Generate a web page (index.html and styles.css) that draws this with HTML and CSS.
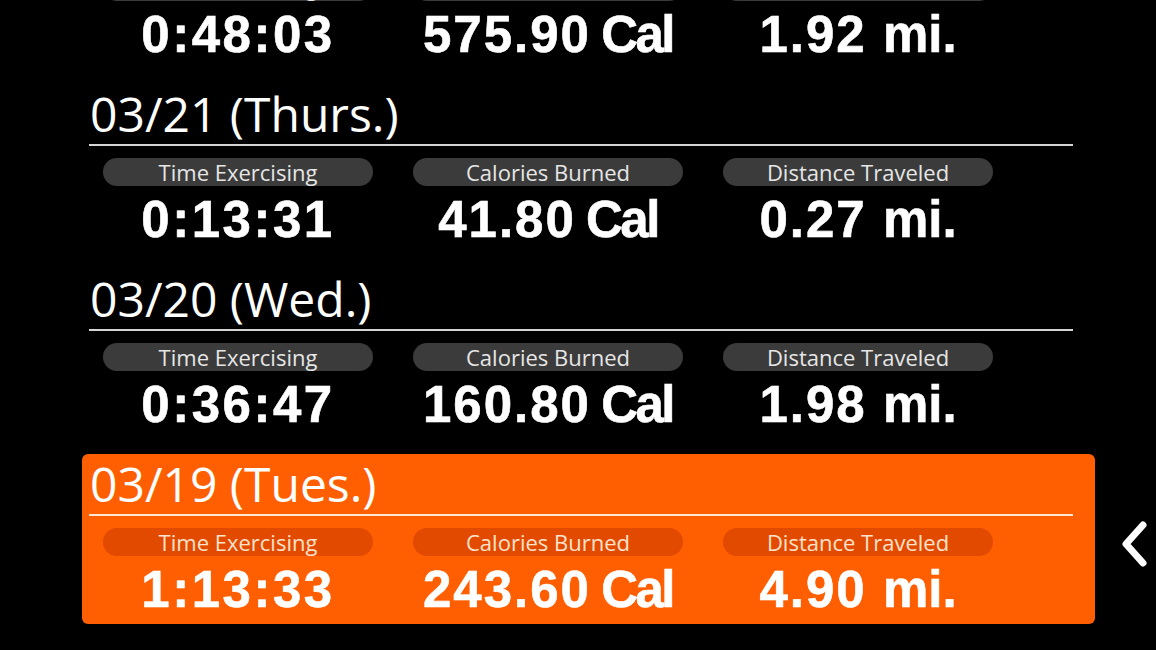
FILE: index.html
```html
<!DOCTYPE html>
<html lang="en">
<head>
<meta charset="utf-8">
<title>Activity Log</title>
<link rel="stylesheet" href="styles.css">
</head>
<body>
<div class="screen">
  <div class="list">
    <section class="day">
      <div class="date">03/22 (Fri.)</div>
      <div class="stats">
        <div class="stat"><div class="pill">Time Exercising</div><div class="value">0:48:03</div></div>
        <div class="stat"><div class="pill">Calories Burned</div><div class="value cal">575.90 <span class="unit">Cal</span></div></div>
        <div class="stat"><div class="pill">Distance Traveled</div><div class="value dist">1.92 <span class="unit">mi.</span></div></div>
      </div>
    </section>
    <section class="day">
      <div class="date">03/21 (Thurs.)</div>
      <div class="stats">
        <div class="stat"><div class="pill">Time Exercising</div><div class="value">0:13:31</div></div>
        <div class="stat"><div class="pill">Calories Burned</div><div class="value cal">41.80 <span class="unit">Cal</span></div></div>
        <div class="stat"><div class="pill">Distance Traveled</div><div class="value dist">0.27 <span class="unit">mi.</span></div></div>
      </div>
    </section>
    <section class="day">
      <div class="date">03/20 (Wed.)</div>
      <div class="stats">
        <div class="stat"><div class="pill">Time Exercising</div><div class="value">0:36:47</div></div>
        <div class="stat"><div class="pill">Calories Burned</div><div class="value cal">160.80 <span class="unit">Cal</span></div></div>
        <div class="stat"><div class="pill">Distance Traveled</div><div class="value dist">1.98 <span class="unit">mi.</span></div></div>
      </div>
    </section>
    <section class="day selected">
      <div class="date">03/19 (Tues.)</div>
      <div class="stats">
        <div class="stat"><div class="pill">Time Exercising</div><div class="value">1:13:33</div></div>
        <div class="stat"><div class="pill">Calories Burned</div><div class="value cal">243.60 <span class="unit">Cal</span></div></div>
        <div class="stat"><div class="pill">Distance Traveled</div><div class="value dist">4.90 <span class="unit">mi.</span></div></div>
      </div>
    </section>
    <section class="day">
      <div class="date">03/18 (Mon.)</div>
      <div class="stats">
        <div class="stat"><div class="pill">Time Exercising</div><div class="value">0:22:10</div></div>
        <div class="stat"><div class="pill">Calories Burned</div><div class="value cal">98.40 <span class="unit">Cal</span></div></div>
        <div class="stat"><div class="pill">Distance Traveled</div><div class="value dist">0.85 <span class="unit">mi.</span></div></div>
      </div>
    </section>
  </div>
  <svg class="back-arrow" width="32" height="52" viewBox="0 0 32 52" aria-hidden="true">
    <polyline points="24,7 7,26 24,45" fill="none" stroke="#ffffff" stroke-width="7" stroke-linecap="round" stroke-linejoin="round"/>
  </svg>
</div>
</body>
</html>
```
FILE: styles.css
```css
html, body {
  margin: 0;
  padding: 0;
  background: #000;
}
.screen {
  position: relative;
  width: 1156px;
  height: 650px;
  overflow: hidden;
  background: #000;
}
.list {
  display: flex;
  flex-direction: column;
  gap: 15px;
  margin-top: -101px;
  margin-left: 82px;
  width: 1013px;
}
.day {
  height: 170px;
  box-sizing: border-box;
  padding: 6px 22px 0 7px;
  border-radius: 6px;
  color: #fff;
}
.day.selected {
  background: #ff5f00;
}
.date {
  font-family: "Open Sans", "Noto Sans", sans-serif;
  font-size: 48px;
  line-height: 48px;
  height: 48px;
  padding-bottom: 6px;
  padding-left: 1px;
  border-bottom: 2px solid #d4d4d4;
  color: #fff;
  white-space: nowrap;
}
.selected .date {
  border-bottom-color: #ffe6d6;
}
.stats {
  display: flex;
  gap: 40px;
  padding-left: 14px;
  margin-top: 12px;
}
.stat {
  width: 270px;
  display: flex;
  flex-direction: column;
  align-items: center;
}
.pill {
  width: 270px;
  height: 28px;
  border-radius: 14px;
  background: #3b3b3b;
  color: #e6e6e6;
  font-family: "Open Sans", "Noto Sans", sans-serif;
  font-size: 22px;
  line-height: 28px;
  text-align: center;
  white-space: nowrap;
}
.selected .pill {
  background: #e24a00;
  color: #ffe2cc;
}
.value {
  margin-top: 8px;
  font-family: "Liberation Sans", Arial, sans-serif;
  font-weight: 700;
  font-size: 51px;
  line-height: 51px;
  letter-spacing: 2.5px;
  -webkit-text-stroke: 0.6px #fff;
  color: #fff;
  white-space: nowrap;
}
.value.cal {
  letter-spacing: 2px;
  word-spacing: -6px;
}
.value.cal .unit {
  letter-spacing: -2.5px;
  word-spacing: 0;
}
.value.dist {
  letter-spacing: 2px;
  word-spacing: 0;
}
.value.dist .unit {
  letter-spacing: 0;
}
.back-arrow {
  position: absolute;
  left: 1119px;
  top: 518px;
}
```
